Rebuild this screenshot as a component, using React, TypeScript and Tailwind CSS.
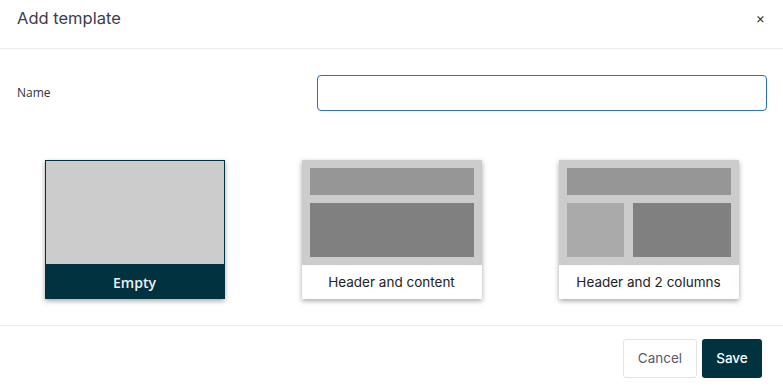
export default function App() {
  return (
    <div className="w-[783px] h-[388px] bg-white flex flex-col font-['Inter',sans-serif]">
      <header className="h-[49px] flex items-center justify-between pl-[17px] pr-[18px] border-b border-[#ebebeb]">
        <h1 className="text-[16.5px] font-normal text-[#3c3c4e] -mt-[12px]">Add template</h1>
        <button className="text-[14px] text-[#333] -mt-[12px] leading-none">×</button>
      </header>

      <div className="flex items-center pl-[17px] pr-[16px] mt-[26px]">
        <label className="w-[300px] text-[12px] text-[#333] font-['Open_Sans',sans-serif]">Name</label>
        <input className="flex-1 h-[36px] border border-[#2e6fb5] rounded-[4px] outline-none px-2" />
      </div>

      <div className="flex justify-center gap-[77px] mt-[49px]">
        <div className="w-[180px] h-[139px] flex flex-col border border-[#00323f] shadow-[0_2px_5px_rgba(0,0,0,0.35)]">
          <div className="flex-1 bg-[#cccccc]" />
          <div className="h-[34px] bg-[#00323f] flex items-center justify-center pt-[2px] text-[14px] font-semibold text-[#eef2f3] font-['Open_Sans',sans-serif]">
            Empty
          </div>
        </div>

        <div className="w-[180px] h-[139px] flex flex-col shadow-[0_2px_5px_rgba(0,0,0,0.35)]">
          <div className="flex-1 bg-[#cccccc] p-[8px] flex flex-col gap-[8px]">
            <div className="h-[27px] bg-[#969696]" />
            <div className="flex-1 bg-[#808080]" />
          </div>
          <div className="h-[34px] bg-white flex items-center justify-center text-[13.5px] text-[#222]">
            Header and content
          </div>
        </div>

        <div className="w-[180px] h-[139px] flex flex-col shadow-[0_2px_5px_rgba(0,0,0,0.35)]">
          <div className="flex-1 bg-[#cccccc] p-[8px] flex flex-col gap-[8px]">
            <div className="h-[27px] bg-[#969696]" />
            <div className="flex-1 flex gap-[9px]">
              <div className="w-[57px] bg-[#aaaaaa]" />
              <div className="flex-1 bg-[#808080]" />
            </div>
          </div>
          <div className="h-[34px] bg-white flex items-center justify-center text-[13.5px] text-[#222]">
            Header and 2 columns
          </div>
        </div>
      </div>

      <footer className="mt-[26px] border-t border-[#ebebeb] flex justify-end gap-[5px] pr-[21px] pt-[13px]">
        <button className="w-[74px] h-[39px] border border-[#e3e3e3] rounded-[3px] text-[13.5px] text-[#5a5a6a] bg-white">
          Cancel
        </button>
        <button className="w-[60px] h-[39px] rounded-[3px] bg-[#00323f] text-[13.5px] font-medium text-white">
          Save
        </button>
      </footer>
    </div>
  );
}
